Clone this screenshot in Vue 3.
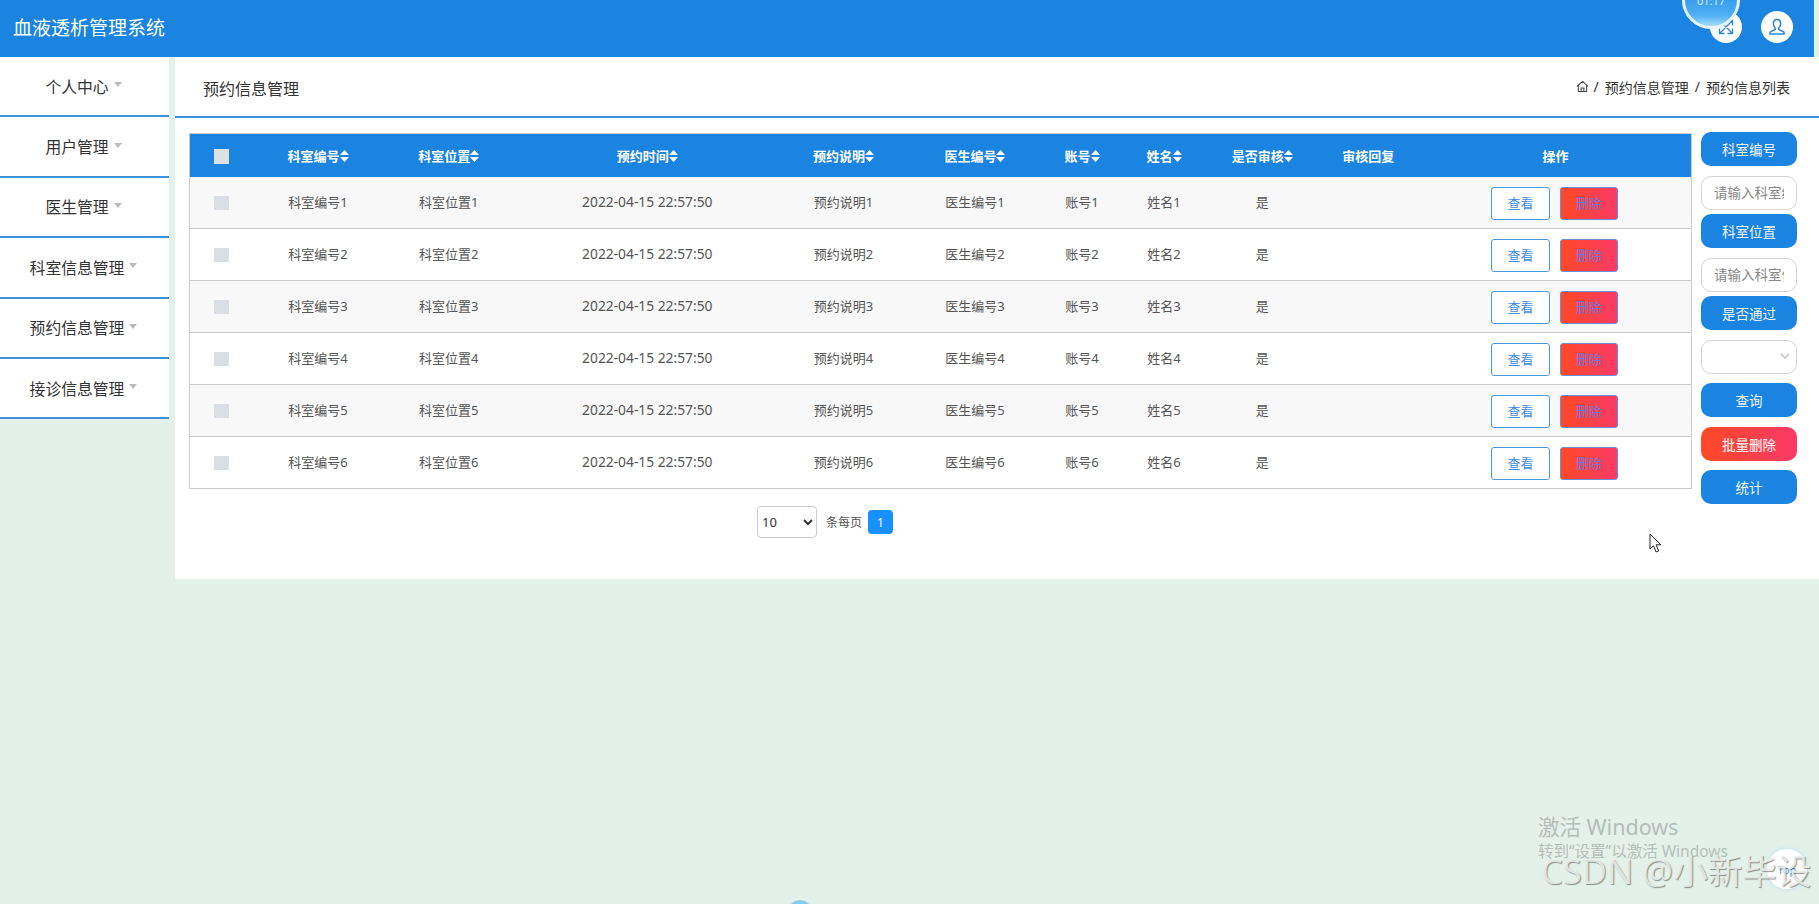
<script setup>
const menus = ['个人中心', '用户管理', '医生管理', '科室信息管理', '预约信息管理', '接诊信息管理']
const cols = [
  { w: 63 }, { w: 131, t: '科室编号', s: 1 }, { w: 130, t: '科室位置', s: 1 }, { w: 267, t: '预约时间', s: 1 },
  { w: 125, t: '预约说明', s: 1 }, { w: 138, t: '医生编号', s: 1 }, { w: 76, t: '账号', s: 1 }, { w: 88, t: '姓名', s: 1 },
  { w: 108, t: '是否审核', s: 1 }, { w: 104, t: '审核回复' }, { w: 271, t: '操作' }
]
const rows = [1, 2, 3, 4, 5, 6]
</script>

<template>
  <div class="page">
    <header class="top">
      <h1 class="brand">血液透析管理系统</h1>
      <div class="tools">
        <span class="round">
          <svg width="20" height="20" viewBox="0 0 20 20" fill="none" stroke="#2a88d8" stroke-width="1.300">
            <path d="M4 16 16 4M11.500 3.500h5v5M3.500 11.500v5h5M4 4l12 12M3.500 8.500v-5h5M16.500 11.500v5h-5" />
          </svg>
        </span>
        <span class="round">
          <svg width="20" height="20" viewBox="0 0 20 20" fill="none" stroke="#2a88d8" stroke-width="1.500">
            <path d="M10 2.500c-2.300 0-3.600 1.800-3.600 4s1.200 4 1.800 4.600v1.400L3 15.200V17h14v-1.800l-5.200-2.700v-1.400c.6-.6 1.800-2.400 1.800-4.600s-1.300-4-3.600-4Z" />
          </svg>
        </span>
      </div>
    </header>

    <div class="body">
      <nav class="side-nav">
        <a v-for="m in menus" :key="m" class="nav-item">{{ m }}<i class="caret"></i></a>
      </nav>

      <main class="main">
        <div class="crumbs">
          <span class="page-title">预约信息管理</span>
          <div class="trail">
            <svg class="home" width="13" height="13" viewBox="0 0 14 14" fill="none" stroke="#444" stroke-width="1.100">
              <path d="M1 6.800 7 1.500l6 5.300M2.500 5.800v6.700h9V5.800M5.500 12.500V8.500h3v4" />
            </svg>
            <span>/</span><span>预约信息管理</span><span>/</span><span>预约信息列表</span>
          </div>
        </div>

        <div class="content">
          <div class="table-wrap">
            <table class="grid">
              <colgroup>
                <col v-for="(c, i) in cols" :key="i" :style="{ width: c.w + 'px' }" />
              </colgroup>
              <thead>
                <tr>
                  <th v-for="(c, i) in cols" :key="i">
                    <span v-if="i === 0" class="check head-check"></span>
                    <span v-else class="th-in">{{ c.t }}
                      <svg v-if="c.s" width="9" height="12" viewBox="0 0 9 12" fill="#fff"><path d="M4.500 0 9 5H0ZM4.500 12 0 7h9Z" /></svg>
                    </span>
                  </th>
                </tr>
              </thead>
              <tbody>
                <tr v-for="n in rows" :key="n">
                  <td><span class="check"></span></td>
                  <td>科室编号{{ n }}</td>
                  <td>科室位置{{ n }}</td>
                  <td class="date">2022-04-15 22:57:50</td>
                  <td>预约说明{{ n }}</td>
                  <td>医生编号{{ n }}</td>
                  <td>账号{{ n }}</td>
                  <td>姓名{{ n }}</td>
                  <td>是</td>
                  <td></td>
                  <td>
                    <div class="ops">
                      <button class="btn-view">查看</button>
                      <button class="btn-del">删除</button>
                    </div>
                  </td>
                </tr>
              </tbody>
            </table>
          </div>

          <aside class="filters">
            <div class="field">
              <button class="pill">科室编号</button>
              <input class="box" placeholder="请输入科室编号" />
            </div>
            <div class="field">
              <button class="pill">科室位置</button>
              <input class="box" placeholder="请输入科室位置" />
            </div>
            <div class="field field-last">
              <button class="pill">是否通过</button>
              <select class="box box-select"><option></option></select>
            </div>
            <button class="pill">查询</button>
            <button class="pill pill-red">批量删除</button>
            <button class="pill">统计</button>
          </aside>
        </div>

        <div class="pager">
          <select class="size"><option>10</option></select>
          <span class="per">条每页</span>
          <span class="num">1</span>
        </div>
      </main>
    </div>

    <div class="timer"><span>01:17</span></div>
    <svg class="cursor" width="14" height="21" viewBox="0 0 14 21">
      <path d="M1 1v15l3.500-3.300 2.600 6.300 2.600-1.100-2.600-6.100H12Z" fill="#fff" stroke="#222" stroke-width="1" />
    </svg>
    <div class="activate">
      <div class="act-big">激活 Windows</div>
      <div class="act-small">转到“设置”以激活 Windows</div>
    </div>
    <div class="to-top">Top</div>
    <div class="csdn">CSDN @小新毕设</div>
    <div class="dot"></div>
  </div>
</template>

<style>
html, body { margin: 0; background: #e4f1ea; }
</style>

<style scoped>
.page {
  position: relative;
  height: 904px;
  overflow: hidden;
  background: #e4f1ea;
  font-family: "Noto Sans", "Noto Sans CJK SC", sans-serif;
  color: #333;
}
.top {
  height: 57px;
  margin-right: 5px;
  background: #1a84e0;
  display: flex;
  align-items: center;
  justify-content: space-between;
  padding: 0 21px 0 13px;
}
.brand {
  margin: -4px 0 0;
  font-size: 19px;
  font-weight: 400;
  color: #fff;
}
.tools { display: flex; gap: 19px; margin-top: -3px; }
.round {
  width: 32px;
  height: 32px;
  border-radius: 50%;
  background: #fff;
  display: flex;
  align-items: center;
  justify-content: center;
}
.body { display: flex; align-items: flex-start; }
.side-nav { width: 169px; margin-right: 6px; background: #fff; flex: none; }
.nav-item {
  display: flex;
  align-items: center;
  justify-content: center;
  height: 58.400px;
  padding-right: 2px;
  box-sizing: content-box;
  width: 167px;
  border-bottom: 2px solid #3d94dd;
  font-size: 15.800px;
  color: #333;
}
.caret {
  width: 0;
  height: 0;
  margin-left: 5px;
  margin-top: -3px;
  border-left: 4.500px solid transparent;
  border-right: 4.500px solid transparent;
  border-top: 5px solid #bbb;
}
.main { flex: 1; height: 522px; background: #fff; min-width: 0; }
.crumbs {
  height: 59px;
  border-bottom: 2px solid #3d94dd;
  display: flex;
  align-items: center;
  justify-content: space-between;
  padding: 0 29px 0 28px;
}
.page-title { font-size: 16px; color: #333; margin-top: 2px; }
.trail { display: flex; align-items: center; gap: 6px; font-size: 14px; color: #333; }
.home { margin-right: -1px; }
.content { display: flex; align-items: flex-start; padding: 14px 22px 0 14px; gap: 9px; }
.table-wrap { width: 1503px; margin-top: 1px; flex: none; }
.grid {
  width: 1503px;
  table-layout: fixed;
  border-collapse: collapse;
  border: 1px solid #ccc;
  font-size: 13px;
}
th {
  height: 43px;
  padding: 0;
  background: #1a84e0;
  color: #fff;
  font-weight: 700;
  font-size: 13px;
  text-align: center;
}
.th-in { display: inline-flex; align-items: center; gap: 0; }
td {
  height: 49px;
  padding: 0 0 2px;
  text-align: center;
  color: #555;
  border-bottom: 1px solid #ccc;
}
td.date { font-size: 13.800px; }
tbody tr:nth-child(odd) td { background: #f8f8f8; }
.check { display: inline-block; width: 15px; height: 14px; background: #dbdfe3; vertical-align: middle; }
.head-check { width: 15px; height: 15px; background: #dde1e6; }
.ops { display: flex; justify-content: center; gap: 10px; padding-right: 2px; margin-top: 4px; }
.btn-view, .btn-del {
  width: 59px;
  height: 33px;
  padding: 0 0 2px;
  box-sizing: border-box;
  border-radius: 3px;
  font-family: inherit;
  font-size: 13px;
  border: 1px solid #4a98dc;
  color: #3f8fdd;
  background: #fff;
}
.btn-del {
  width: 58px;
  background: linear-gradient(90deg, #ff4826, #fb3a66);
  border-color: #6b8fd4;
  color: #6f78dc;
}
.filters { width: 96px; display: flex; flex-direction: column; gap: 9.500px; flex: none; }
.field { display: flex; flex-direction: column; gap: 10px; margin-bottom: -5.500px; }
.field-last { gap: 9.500px; margin-bottom: 0; }
.pill {
  width: 96px;
  height: 34px;
  padding: 0;
  border: none;
  border-radius: 10px;
  background: #1a84e0;
  color: #f2f7fb;
  font-family: inherit;
  font-size: 13.500px;
}
.pill-red { background: linear-gradient(90deg, #ff4826, #fb3a66); color: #fff; }
.box {
  width: 96px;
  height: 34px;
  box-sizing: border-box;
  padding: 0 12px;
  border: 1px solid #d6d6d6;
  border-radius: 10px;
  background: #fff;
  font-family: inherit;
  font-size: 13.500px;
  outline: none;
}
.box::placeholder { color: #888; }
.box-select {
  appearance: none;
  background-image: url("data:image/svg+xml,%3Csvg xmlns='http://www.w3.org/2000/svg' width='10' height='7' viewBox='0 0 10 7'%3E%3Cpath d='M1 1l4 4 4-4' fill='none' stroke='%23ccc' stroke-width='1.800'/%3E%3C/svg%3E");
  background-repeat: no-repeat;
  background-position: right 6px center;
}
.pager { display: flex; align-items: center; margin: 2px 0 0 582px; }
.size {
  width: 60px;
  height: 32px;
  box-sizing: border-box;
  border: 1px solid #ccc;
  border-radius: 4px;
  background: #fff;
  font-family: inherit;
  font-size: 13px;
  color: #333;
}
.per { margin-left: 9px; font-size: 12px; color: #555; }
.num {
  width: 25px;
  height: 24px;
  margin-left: 6px;
  border-radius: 4px;
  background: #1890ff;
  color: #fff;
  font-size: 12px;
  display: flex;
  align-items: center;
  justify-content: center;
}
.timer {
  position: absolute;
  left: 1682px;
  top: -29px;
  width: 52px;
  height: 52px;
  border: 3px solid #e8f4fb;
  border-radius: 50%;
  background: linear-gradient(180deg, #1a84e0 10%, #4fb0f5 80%, #a8dcf5);
  display: flex;
  align-items: flex-end;
  justify-content: center;
  color: #d8ecfa;
  font-size: 11px;
}
.timer span { margin-bottom: 18px; }
.cursor { position: absolute; left: 1649px; top: 533px; }
.activate { position: absolute; left: 1538px; top: 813px; color: #b4bfbb; }
.act-big { font-size: 21.500px; line-height: 28px; }
.act-small { font-size: 15.500px; line-height: 20px; }
.to-top {
  position: absolute;
  left: 1767px;
  top: 849px;
  width: 40px;
  height: 40px;
  border-radius: 50%;
  background: #fff;
  box-shadow: 0 0 5px #bfe0ee;
  color: #3d94dd;
  font-size: 11px;
  display: flex;
  align-items: center;
  justify-content: center;
}
.csdn {
  position: absolute;
  left: 1541px;
  top: 848px;
  font-size: 34.500px;
  line-height: 46px;
  white-space: nowrap;
  color: rgba(238, 242, 240, .85);
  text-shadow: 1px 1px 1px rgba(0, 0, 0, .4);
}
.dot {
  position: absolute;
  left: 788px;
  top: 900px;
  width: 24px;
  height: 24px;
  border-radius: 50%;
  background: #8cc9ee;
}
</style>
